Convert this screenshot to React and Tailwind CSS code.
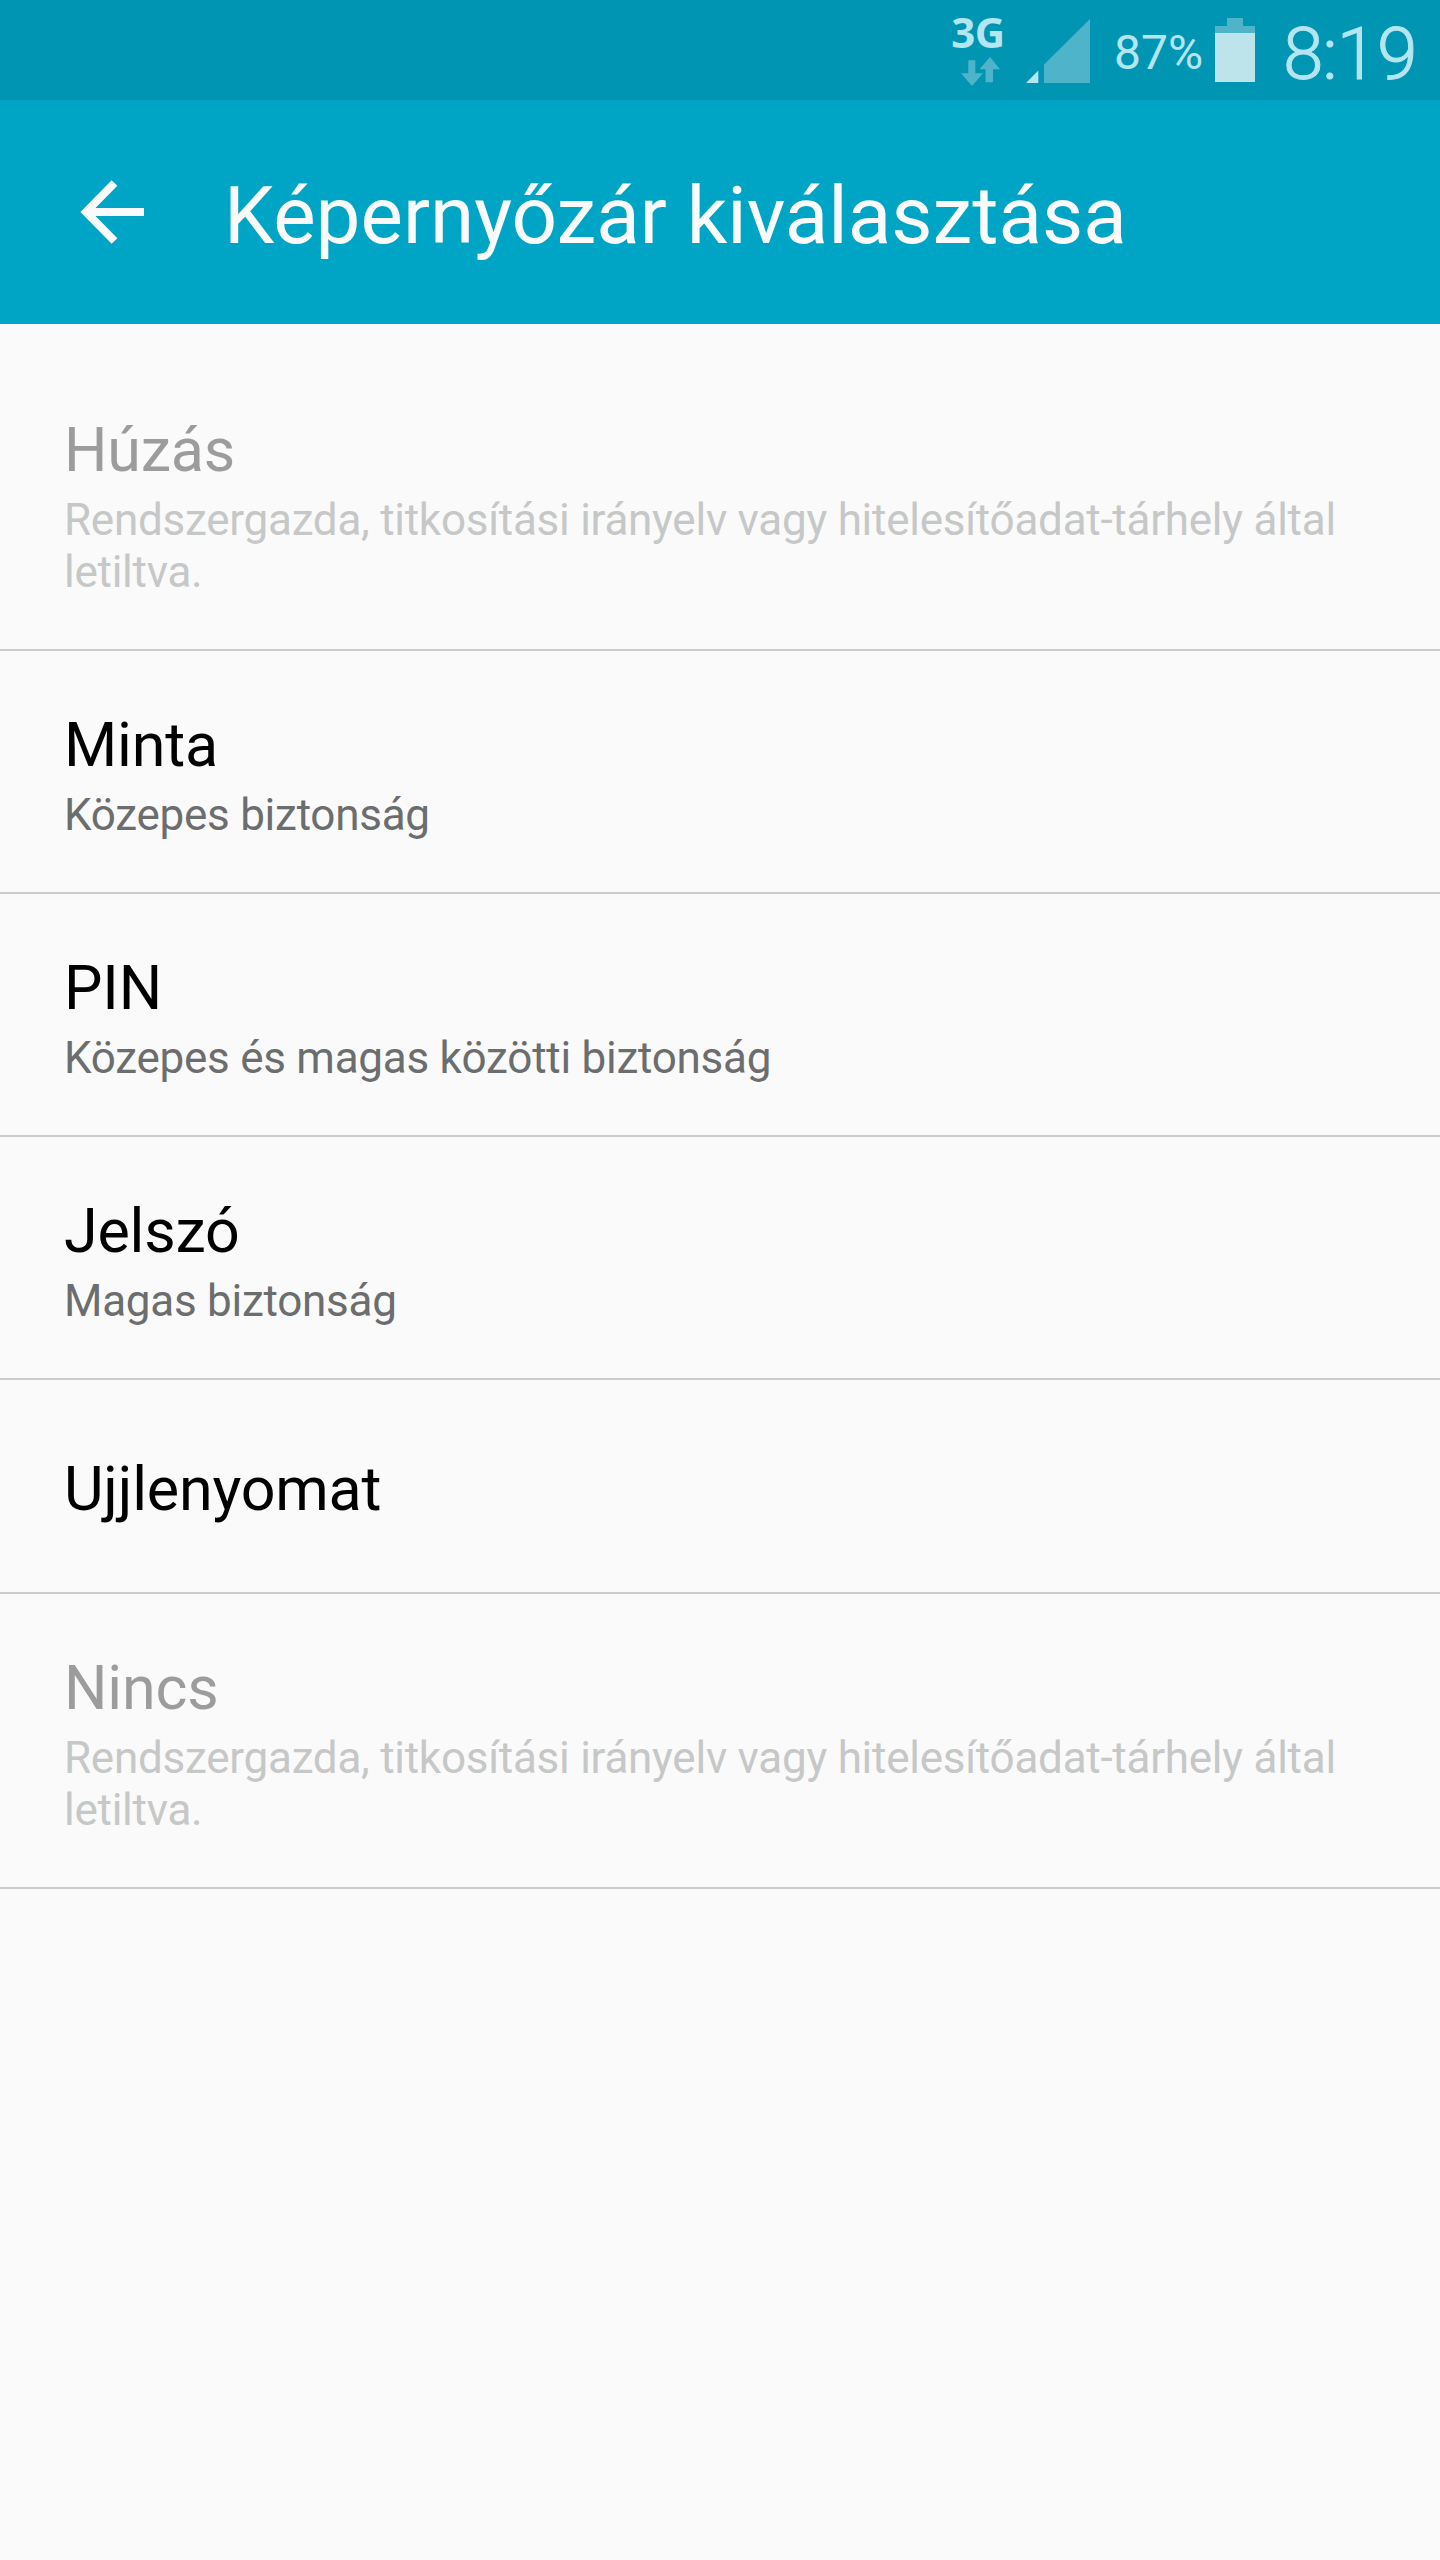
const DISABLED_TEXT = "Rendszergazda, titkosítási irányelv vagy hitelesítőadat-tárhely által letiltva."

const lockTypes = [
  { title: "Húzás", summary: DISABLED_TEXT, disabled: true },
  { title: "Minta", summary: "Közepes biztonság" },
  { title: "PIN", summary: "Közepes és magas közötti biztonság" },
  { title: "Jelszó", summary: "Magas biztonság" },
  { title: "Ujjlenyomat" },
  { title: "Nincs", summary: DISABLED_TEXT, disabled: true },
]

function NetworkIcon() {
  return (
    <div className="flex flex-col items-center w-[52px] mt-[15px] mr-[22px]">
      <span className="font-['Open_Sans',sans-serif] font-bold text-[42px] leading-[34px] tracking-[-0.5px]">3G</span>
      <svg className="w-[39px] h-[30px] mt-[8px] ml-[5px] shrink-0" viewBox="0 0 39 30" fill="#4db4ca">
        <path d="M7.300 3.300h7v13H22L11 29 0 16.300h7.300z" />
        <path d="M24.500 25.300H32v-13h7L29 0 18.500 12.300h6z" />
      </svg>
    </div>
  )
}

function SignalIcon() {
  return (
    <svg className="w-16 h-16 mt-[19px]" viewBox="0 0 64 64">
      <path d="M0 64L12.300 51.500V64z" fill="#b3e6f0" />
      <path d="M18 45.500L64 0V64H18z" fill="#4db4ca" />
    </svg>
  )
}

function BatteryIcon() {
  return (
    <svg className="w-10 h-16 mt-[18px]" viewBox="0 0 40 64">
      <path d="M12 0h16v8h12v7H0V8h12z" fill="#4db4ca" />
      <path d="M0 15h40v49H0z" fill="#bce4ea" />
    </svg>
  )
}

function StatusBar() {
  return (
    <div className="flex justify-end h-[100px] pr-[22px] bg-[#0095b3] text-[#b3e6f0]">
      <NetworkIcon />
      <SignalIcon />
      <span className="w-[89px] ml-6 mr-3 pt-[26px] text-[48px] leading-[54px]">87%</span>
      <BatteryIcon />
      <span className="w-[135px] ml-7 pt-[14px] text-[73px] leading-[80px] font-light [-webkit-text-stroke:1px_#b3e6f0] whitespace-nowrap">
        <span className="tracking-[-1.2px]">8</span>
        <span className="tracking-[-1px]">:</span>19
      </span>
    </div>
  )
}

function LockRow({ item }) {
  return (
    <li className={`px-16 border-b-2 border-[#cbcccc] ${item.summary ? "pt-[58px] pb-[51px]" : "pt-[73px] pb-[67px]"}`}>
      <div className={`text-[61px] leading-[72px] tracking-[-0.2px] ${item.disabled ? "text-[#9c9c9c]" : "text-black"}`}>
        {item.title}
      </div>
      {item.summary && (
        <div className={`mt-2 text-[44px] leading-[52px] tracking-[-0.26px] ${item.disabled ? "text-[#c6c7c7]" : "text-[#6b6d6e]"}`}>
          {item.summary}
        </div>
      )}
    </li>
  )
}

export default function App() {
  return (
    <div className="w-[1440px] h-[2560px] bg-[#fafafa] font-[Roboto,sans-serif] overflow-hidden">
      <StatusBar />
      <header className="flex items-center h-[224px] pl-20 bg-[#00a5c5] text-[#fafafa]">
        <svg className="w-16 h-16" viewBox="0 0 64 64" fill="none" stroke="currentColor" strokeWidth="8">
          <path d="M34.500 3L6 32L34.500 61M7 32H64" />
        </svg>
        <h1 className="ml-20 pt-2 text-[80px] leading-[94px]">Képernyőzár kiválasztása</h1>
      </header>
      <ul className="pt-8">
        {lockTypes.map((item) => (
          <LockRow key={item.title} item={item} />
        ))}
      </ul>
    </div>
  )
}
